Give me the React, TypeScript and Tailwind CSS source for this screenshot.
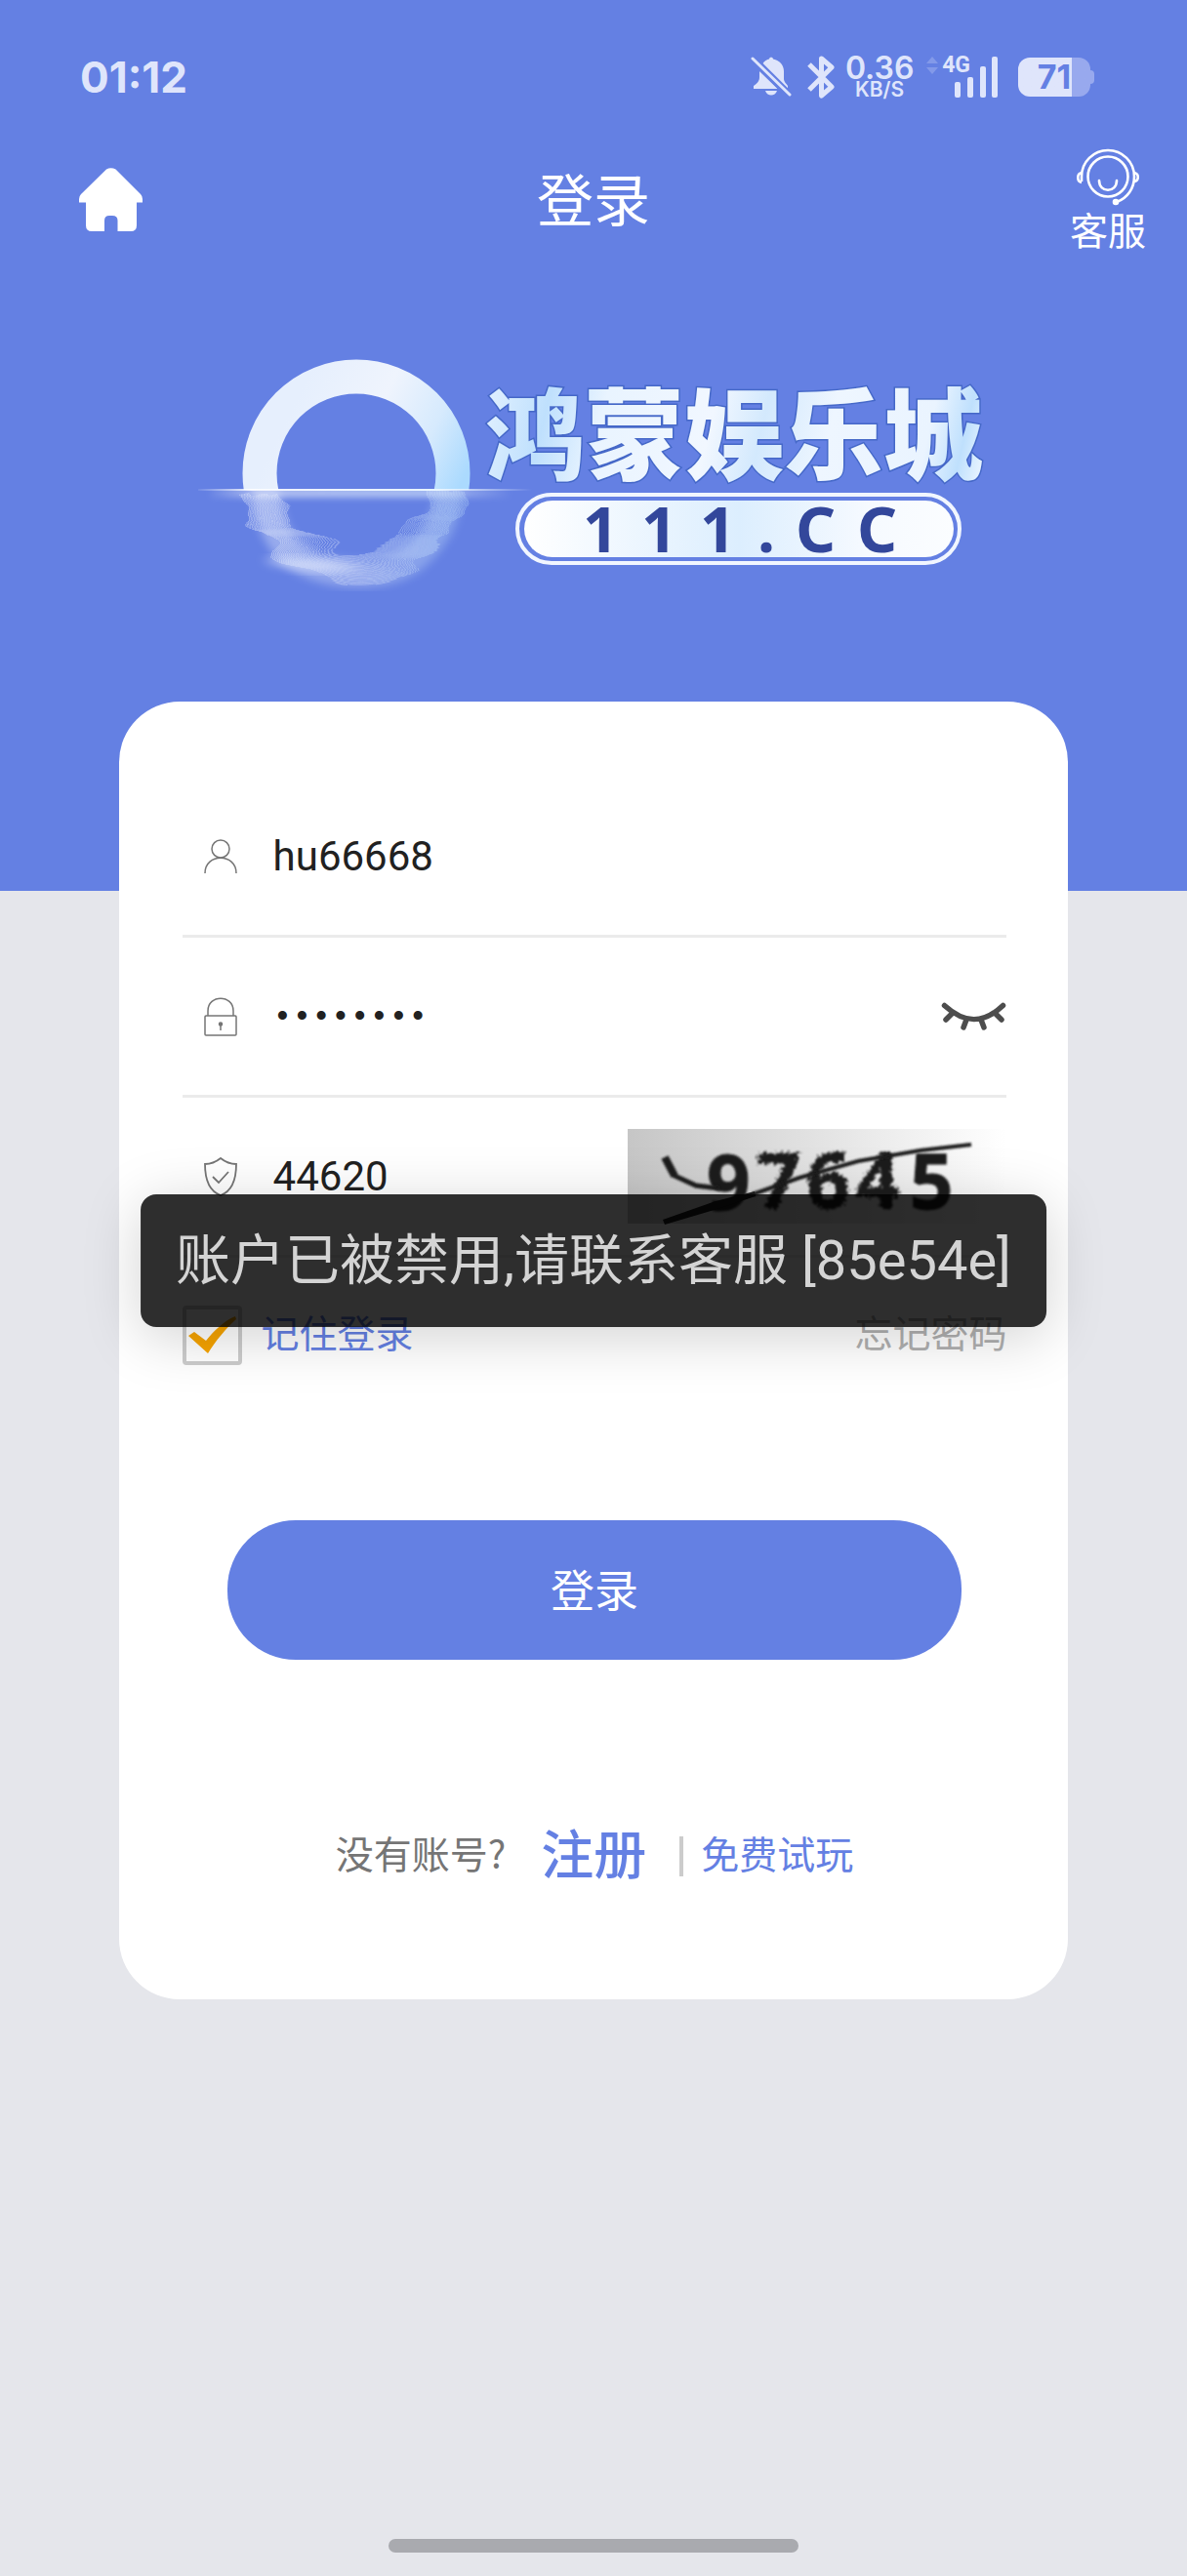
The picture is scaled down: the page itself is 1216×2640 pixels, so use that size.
import { useState } from "react";

// Ripple strands under the ring of the logo
const strands = Array.from({ length: 26 }, (_, k) => {
  const r = 80 + k * 1.5;
  const points: string[] = [];
  for (let a = 4; a <= 176; a += 2) {
    const t = (a * Math.PI) / 180;
    const y = 485 + r * Math.sin(t) * 0.98;
    const depth = Math.max(0, y - 502) / 100;
    const wave = Math.sin((y - 506) / 6) * 7 * Math.sin(depth * Math.PI);
    const x = 365 + r * Math.cos(t) * (1 - 0.1 * depth) + wave;
    if (y >= 503) points.push(`${x.toFixed(1)} ${y.toFixed(1)}`);
  }
  return "M" + points.join("L");
});

function Logo() {
  return (
    <svg viewBox="183 340 850 280" className="mx-auto w-[850px] max-w-full" role="img" aria-label="鸿蒙娱乐城 111.CC">
      <defs>
        <linearGradient id="ring" x1="0.1" y1="0.3" x2="1" y2="0.75">
          <stop offset="0" stopColor="#e6effd" />
          <stop offset="0.4" stopColor="#eff4fd" />
          <stop offset="0.7" stopColor="#d6eafd" />
          <stop offset="0.95" stopColor="#abdafe" />
        </linearGradient>
        <linearGradient id="ripple" gradientUnits="userSpaceOnUse" x1="250" y1="0" x2="480" y2="0">
          <stop offset="0" stopColor="#dfe6fb" />
          <stop offset="0.5" stopColor="#c3d0f6" />
          <stop offset="1" stopColor="#a9c8f5" />
        </linearGradient>
        <linearGradient id="horizon" x1="0" x2="1">
          <stop offset="0" stopColor="#fff" stopOpacity="0.08" />
          <stop offset="0.16" stopColor="#fff" stopOpacity="0.9" />
          <stop offset="0.72" stopColor="#e8f5ff" />
          <stop offset="1" stopColor="#fff" stopOpacity="0" />
        </linearGradient>
        <linearGradient id="word" gradientUnits="userSpaceOnUse" x1="499" y1="380" x2="1008" y2="500">
          <stop offset="0" stopColor="#e3f1ff" />
          <stop offset="0.13" stopColor="#bfe0fd" />
          <stop offset="0.24" stopColor="#e9f4ff" />
          <stop offset="0.45" stopColor="#f1f7ff" />
          <stop offset="0.55" stopColor="#d3e9fd" />
          <stop offset="0.68" stopColor="#eef6ff" />
          <stop offset="0.87" stopColor="#eaf4ff" />
          <stop offset="0.94" stopColor="#bfe0fd" />
          <stop offset="1" stopColor="#f3f9ff" />
        </linearGradient>
        <linearGradient id="pill" x1="0" x2="1">
          <stop offset="0" stopColor="#fff" />
          <stop offset="0.5" stopColor="#dceefe" />
          <stop offset="0.8" stopColor="#f6faff" />
          <stop offset="1" stopColor="#fbfdff" />
        </linearGradient>
        <filter id="soft" x="-20%" y="-20%" width="140%" height="140%">
          <feGaussianBlur stdDeviation="5" />
        </filter>
        <filter id="water" x="-10%" y="-10%" width="120%" height="120%">
          <feTurbulence type="fractalNoise" baseFrequency="0.006 0.05" numOctaves="2" seed="8" />
          <feDisplacementMap in="SourceGraphic" scale="26" xChannelSelector="R" />
        </filter>
        <filter id="glow" x="-5%" y="-200%" width="110%" height="500%">
          <feGaussianBlur stdDeviation="3" />
        </filter>
        <clipPath id="above">
          <rect x="183" y="340" width="850" height="162" />
        </clipPath>
        <clipPath id="below">
          <rect x="183" y="503" width="850" height="117" />
        </clipPath>
      </defs>

      <g clipPath="url(#above)">
        <circle cx="365" cy="485" r="99" fill="none" stroke="url(#ring)" strokeWidth="35" />
      </g>
      <g clipPath="url(#below)">
        <path
          d="M272 500C274 530 284 558 306 572C336 592 396 594 424 572C448 552 458 530 460 500"
          fill="none"
          stroke="url(#ripple)"
          strokeWidth="28"
          opacity="0.45"
          filter="url(#soft)"
        />
        <g filter="url(#water)">
          {strands.map((d, i) => (
            <path key={i} d={d} fill="none" stroke="url(#ripple)" strokeWidth="1" opacity="0.5" />
          ))}
        </g>
        <path d="M268 574C300 566 330 574 372 582C336 590 300 586 268 574Z" fill="#dfe7fc" opacity="0.6" filter="url(#soft)" />
        <rect x="215" y="500" width="310" height="10" fill="url(#horizon)" opacity="0.55" filter="url(#glow)" />
      </g>
      <rect x="203" y="501" width="342" height="2" fill="url(#horizon)" />

      <text
        x="497"
        y="484"
        fontSize="102"
        fontWeight="900"
        fill="url(#word)"
        stroke="#4568c8"
        strokeWidth="3"
        paintOrder="stroke"
        className="font-['Noto_Sans_CJK_SC',sans-serif]"
      >
        鸿蒙娱乐城
      </text>

      <rect x="530" y="507" width="453" height="70" rx="35" fill="none" stroke="#f1f6ff" strokeWidth="4" />
      <rect x="537" y="513" width="440" height="58" rx="29" fill="url(#pill)" />
      <text
        x="597 657 717 776 815 878"
        y="566"
        fontSize="64"
        fontWeight="700"
        fill="#33479b"
        className="font-['Noto_Sans',sans-serif]"
      >
        111.CC
      </text>
    </svg>
  );
}

function StatusBar() {
  return (
    <div className="flex h-[152px] items-center justify-between pt-[6px] pr-[95px] pl-[82px] font-['Inter',sans-serif] text-[#dfe5fb]">
      <time className="text-[44px] leading-none font-bold">01:12</time>
      <div className="flex items-center">
        <svg className="h-11 w-[42px]" viewBox="0 0 42 44" fill="currentColor" aria-hidden="true">
          <path d="M9 16L28 34H3v-3c4-3 6-5 6-9z" />
          <path d="M12 9C14 5 17 4 19 3.500C19 1 23 1 23 3.500C30 5 34 10 34 16v8c0 3 3 5 4 7v3z" />
          <path d="M15 36h12c-2 6-10 6-12 0z" />
          <path d="M3 4L40 41" stroke="#6480e3" strokeWidth="8" />
          <path d="M2 3L40 40" stroke="currentColor" strokeWidth="3" strokeLinecap="round" />
        </svg>
        <svg className="ml-4 h-11 w-[28px]" viewBox="0 0 28 44" fill="none" stroke="currentColor" strokeWidth="5" strokeLinejoin="round" aria-hidden="true">
          <path d="M2 9L25 32L14.500 41V3L25 12L2 35" />
        </svg>
        <div className="ml-3 flex w-[68px] flex-col items-center font-semibold">
          <span className="text-[32px] leading-[25px]">0.36</span>
          <span className="text-[21px] leading-[20px]">KB/S</span>
        </div>
        <div className="ml-[14px] flex h-[44px] items-start">
          <svg className="mt-px h-[18px] w-[12px] opacity-25" viewBox="0 0 12 18" fill="currentColor" aria-hidden="true">
            <path d="M6 0l6 7H0zM6 18l6-7H0z" />
          </svg>
          <span className="ml-1 font-['Roboto',sans-serif] text-[23px] leading-5 font-bold">4G</span>
          <svg className="-ml-[16px] h-[44px] w-[45px]" viewBox="0 0 45 44" fill="currentColor" aria-hidden="true">
            <rect x="0" y="27" width="6" height="16" rx="2" />
            <rect x="13" y="22" width="6" height="21" rx="2" />
            <rect x="26" y="11" width="6" height="32" rx="2" />
            <rect x="38" y="1" width="6" height="42" rx="2" />
          </svg>
        </div>
        <div className="ml-5 flex items-center">
          <div className="flex h-10 w-[74px] items-center justify-center rounded-xl bg-linear-to-r from-[#dfe5fb] from-75% to-[#98a9ee] to-75%">
            <span className="text-[34px] leading-10 font-bold text-[#6480e3]">71</span>
          </div>
          <div className="h-[14px] w-1 rounded-r bg-[#98a9ee]" />
        </div>
      </div>
    </div>
  );
}

function NavBar() {
  return (
    <nav className="grid h-[104px] grid-cols-[1fr_auto_1fr] items-center pr-[42px] pl-[81px] text-white">
      <a href="#home" aria-label="首页" className="justify-self-start">
        <svg className="size-[65px]" viewBox="0 0 65 65" fill="currentColor" aria-hidden="true">
          <path d="M28 1.500Q32.500-1 37.500 1.500L63 27Q65 29 65 32V35.500H59V59Q59 65 53 65H39.500V54Q39.500 49 34 49H31Q26 49 26 54V65H13Q7 65 7 59V35.500H0V32Q0 29 2 27Z" />
        </svg>
      </a>
      <h1 className="-ml-[39px] pb-1 text-[58px] leading-none">登录</h1>
      <a href="#service" className="flex flex-col items-center justify-self-end">
        <svg className="h-[60px] w-[64px]" viewBox="0 0 64 60" fill="none" stroke="currentColor" strokeWidth="2.600" aria-hidden="true">
          <circle cx="32" cy="29" r="20.500" />
          <path d="M5 34V29A27 27 0 0 1 59 29C59 41 52 51 41 55" />
          <path d="M5 25C0 26 0 34 5 35M59 25C64 26 64 33 59 34" />
          <path d="M23 33C23 46 41 46 41 33" strokeLinecap="round" />
          <circle cx="40" cy="55" r="2" fill="currentColor" />
        </svg>
        <span className="text-[39px] leading-[44px]">客服</span>
      </a>
    </nav>
  );
}

function Captcha() {
  return (
    <button type="button" aria-label="刷新验证码" className="h-[97px] w-[388px] shrink-0">
      <svg viewBox="0 0 388 97" className="size-full overflow-visible">
        <defs>
          <linearGradient id="paper" x1="0" x2="1">
            <stop offset="0" stopColor="#c6c6c6" />
            <stop offset="1" stopColor="#ffffff" />
          </linearGradient>
          <filter id="rough" x="-10%" y="-10%" width="120%" height="120%">
            <feTurbulence type="fractalNoise" baseFrequency="0.3" numOctaves="2" seed="4" />
            <feDisplacementMap in="SourceGraphic" scale="10" xChannelSelector="R" yChannelSelector="G" />
            <feGaussianBlur stdDeviation="0.8" />
          </filter>
          <filter id="blur">
            <feGaussianBlur stdDeviation="0.9" />
          </filter>
        </defs>
        <rect width="388" height="97" fill="url(#paper)" />
        <g
          fontSize="78"
          fontWeight="700"
          fill="#1c1c1c"
          stroke="#1c1c1c"
          strokeWidth="1"
          className="font-['Noto_Sans',sans-serif]"
        >
          <text x="81" y="83" filter="url(#blur)">9</text>
          <text x="132 183 234" y="81" filter="url(#rough)">764</text>
          <text x="289" y="82" filter="url(#blur)">5</text>
        </g>
        <g fill="none" stroke="#1c1c1c" strokeWidth="4" filter="url(#blur)">
          <path d="M38 29L48 48" strokeWidth="8" />
          <path d="M46 47L70 58L94 61" strokeWidth="5" />
          <path d="M128 67L176 50L236 33L300 22L352 16" />
        </g>
        <path d="M36 93L90 74L130 64L131 69L92 82L38 98Z" fill="#1c1c1c" />
      </svg>
    </button>
  );
}

const fieldRow = "flex h-[164px] items-center border-b-3 border-[#ebebeb] pl-[21px]";
const fieldInput = "ml-9 h-16 min-w-0 flex-1 bg-transparent text-[#212121] outline-none";
const fieldText = "font-['Roboto',sans-serif] text-[42px]";
const fieldIcon = "h-10 w-9 shrink-0 text-[#757575]";

export default function App() {
  const [username, setUsername] = useState("hu66668");
  const [password, setPassword] = useState("password");
  const [code, setCode] = useState("44620");
  const [remember, setRemember] = useState(true);

  return (
    <div className="relative flex min-h-screen flex-col bg-[#e5e6eb] font-['Noto_Sans_CJK_SC',sans-serif]">
      <header className="bg-[#6480e3] pb-[293px]">
        <StatusBar />
        <NavBar />
        <div className="mt-[84px]">
          <Logo />
        </div>
      </header>

      <main className="mx-[10%] -mt-[194px] rounded-[62px] bg-white pt-[78px] pr-[63px] pb-[121px] pl-[65px]">
        <form onSubmit={(e) => e.preventDefault()}>
          <div className={fieldRow}>
            <svg className={fieldIcon} viewBox="0 0 36 40" fill="none" stroke="currentColor" strokeWidth="1.500" aria-hidden="true">
              <circle cx="18" cy="12" r="9" />
              <path d="M2 37C2 16 34 16 34 37" />
            </svg>
            <input
              className={`${fieldInput} ${fieldText}`}
              aria-label="用户名"
              value={username}
              onChange={(e) => setUsername(e.target.value)}
            />
          </div>

          <div className={fieldRow}>
            <svg className={fieldIcon} viewBox="0 0 36 40" fill="none" stroke="currentColor" strokeWidth="1.500" aria-hidden="true">
              <rect x="2" y="19" width="32" height="20" rx="1" />
              <path d="M5 19V14C5-3 31-3 31 14V19M18 27V34" />
              <circle cx="18" cy="27.500" r="1.500" fill="currentColor" />
            </svg>
            <input
              className={`${fieldInput} pt-1 font-['Liberation_Mono',monospace] text-[33px]`}
              type="password"
              aria-label="密码"
              value={password}
              onChange={(e) => setPassword(e.target.value)}
            />
            <button type="button" aria-label="显示密码">
              <svg className="h-[30px] w-[67px]" viewBox="0 0 67 30" fill="none" stroke="#4d4d4d" strokeWidth="5.500" strokeLinecap="round" aria-hidden="true">
                <path d="M3.500 3.500C24 22 43 23 63.500 3.500M12 11L5 18M55 11L62 18M26 18L23 26M41 18L44 26" />
              </svg>
            </button>
          </div>

          <div className={fieldRow}>
            <svg className={fieldIcon} viewBox="0 0 36 40" fill="none" stroke="currentColor" strokeWidth="1.800" aria-hidden="true">
              <path d="M18 1C13 5 7 7 2 7C2 23 7 35 18 39C29 35 34 23 34 7C29 7 23 5 18 1Z" />
              <path d="M10 20L16 26L26 15" />
            </svg>
            <input
              className={`${fieldInput} ${fieldText}`}
              aria-label="验证码"
              value={code}
              onChange={(e) => setCode(e.target.value)}
            />
            <Captcha />
          </div>

          <div className="mt-[49px] flex items-start justify-between text-[39px] leading-[52px]">
            <label className="flex items-start gap-5 text-[#6480e3]">
              <span className="grid size-[61px]">
                <input
                  type="checkbox"
                  className="peer col-start-1 row-start-1 appearance-none rounded border-4 border-[#ccc]"
                  checked={remember}
                  onChange={(e) => setRemember(e.target.checked)}
                />
                <svg className="invisible col-start-1 row-start-1 size-[61px] peer-checked:visible" viewBox="0 0 61 61" fill="#f7a400" aria-hidden="true">
                  <path d="M6 31L12 27L24 36C32 26 42 16 54 11L55 14C44 24 34 36 26 49Z" />
                </svg>
              </span>
              记住登录
            </label>
            <a href="#forgot" className="text-[#b0b0b0]">
              忘记密码
            </a>
          </div>

          <button
            type="submit"
            className="mx-auto mt-[159px] block h-[143px] w-[752px] max-w-full rounded-[70px] bg-[#6480e3] pb-1 text-[45px] text-white"
          >
            登录
          </button>
        </form>

        <div className="mt-[167px] flex items-center justify-center text-[39px] leading-[60px] text-[#6480e3]">
          <span className="text-[#757575]">没有账号?</span>
          <a href="#register" className="ml-9 text-[54px] font-medium">
            注册
          </a>
          <span className="mt-2 mr-[18px] ml-[34px] h-[41px] w-1 bg-[#ccc]" />
          <a href="#trial">免费试玩</a>
        </div>
      </main>

      <div className="mx-auto mt-auto mb-6 h-[14px] w-[420px] rounded-full bg-[#a9aaaf]" />

      <div
        role="alert"
        className="absolute top-[1224px] left-1/2 -translate-x-1/2 rounded-2xl bg-black/82 px-9 py-7 font-['Roboto','Noto_Sans_CJK_SC',sans-serif] text-[56px] leading-[80px] whitespace-nowrap text-[#d4d4d4] shadow-[0_10px_60px_rgba(0,0,0,0.18)]"
      >
        账户已被禁用,请联系客服 [85e54e]
      </div>
    </div>
  );
}
